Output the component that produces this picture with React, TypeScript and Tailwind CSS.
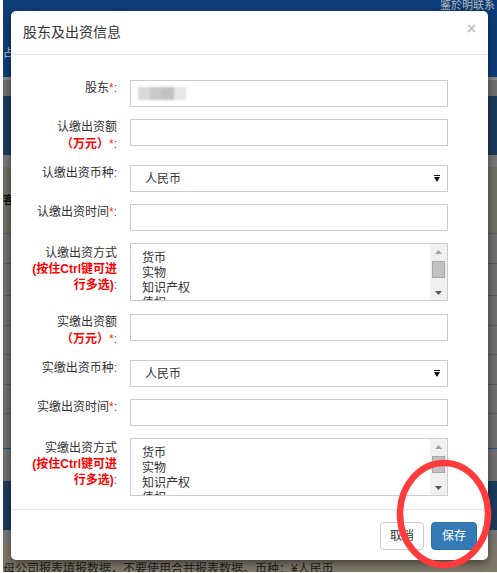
import React from 'react';

const OPTIONS = ['货币', '实物', '知识产权', '债权'];

const Colon = () => <span className="text-[#7b2fd6]">:</span>;
const Star = () => <span className="text-[#ff2a00]">*</span>;

function Row({ h, label, lead = 'leading-[17px]', children }: { h: string; label: React.ReactNode; lead?: string; children: React.ReactNode }) {
  return (
    <div className={`flex ${h}`}>
      <div className={`w-[93px] shrink-0 text-right text-[12px] text-[#333] ${lead}`}>{label}</div>
      <div className="ml-[13px] w-[318px]">{children}</div>
    </div>
  );
}

function TextInput({ children }: { children?: React.ReactNode }) {
  return <div className="flex h-[27px] items-center border border-[#ccc] bg-white">{children}</div>;
}

function Select() {
  return (
    <div className="flex h-[27px] items-center justify-between border border-[#ccc] bg-white pl-[14px] pr-[7px] text-[12px] text-[#333]">
      <span>人民币</span>
      <svg width="6" height="7" viewBox="0 0 6 7">
        <path d="M0 0h6v1H0z M0 2h6L3 7z" fill="#111" />
      </svg>
    </div>
  );
}

function ListBox() {
  return (
    <div className="flex h-[58px] overflow-hidden border border-[#ccc] bg-white">
      <div className="flex-1 pl-[11px] pt-[7px] text-[12px] leading-[15px] text-[#333]">
        {OPTIONS.map((o) => (
          <div key={o}>{o}</div>
        ))}
      </div>
      {/* scrollbar */}
      <div className="flex w-[17px] flex-col items-center bg-[#f0f0f0]">
        <svg className="mt-[6px]" width="7" height="4" viewBox="0 0 7 4">
          <path d="M0 4L3.5 0L7 4z" fill="#a3a3a3" />
        </svg>
        <div className="mt-[7px] h-[17px] w-[13px] border border-[#a8a8a8] bg-[#c1c1c1]" />
        <svg className="mt-[13px]" width="7" height="4" viewBox="0 0 7 4">
          <path d="M0 0h7L3.5 4z" fill="#555" />
        </svg>
      </div>
    </div>
  );
}

function Backdrop() {
  return (
    <div className="flex h-[573px] w-[497px] flex-col border-l-[3px] border-white">
      <div className="flex h-[77px] items-start justify-between bg-[#0d3d78] text-[11px] leading-[11px] text-[#b9b9b9]">
        <span className="mt-[48px] text-[#c8c8c8]">占</span>
        <span className="mr-[2px]">鉴於明联系</span>
      </div>
      <div className="h-[3px] bg-[#8a8a8a]" />
      <div className="h-[16px] bg-[#6f6f6f]" />
      <div className="h-[59px] bg-[#1b3a5c]" />
      <div className="h-[12px] bg-[#777]" />
      <div className="flex h-[66px] items-center bg-[#6b7062] text-[11px] font-bold text-[#111]">
        <span>客</span>
      </div>
      <div className="h-[30px] border-t border-[#5d5d5d] bg-[#6f6f6f]" />
      <div className="h-[32px] border-t border-[#5d5d5d] bg-[#6f6f6f]" />
      <div className="h-[30px] border-t border-[#5d5d5d] bg-[#6f6f6f]" />
      <div className="h-[29px] border-t border-[#5d5d5d] bg-[#6f6f6f]" />
      <div className="h-[30px] border-t border-[#5d5d5d] bg-[#6f6f6f]" />
      <div className="h-[29px] border-t border-[#5d5d5d] bg-[#6f6f6f]" />
      <div className="h-[35px] border-t border-[#5d5d5d] bg-[#6f6f6f]" />
      <div className="h-[17px] border-t border-[#1b4f8a] bg-[#707070]" />
      <div className="h-[16px] bg-[#707070]" />
      <div className="h-[49px] bg-[#1b3a5c]" />
      <div className="h-[12px] bg-[#777]" />
      <div className="flex h-[30px] items-end overflow-hidden bg-[#7e786a]">
        <span className="-mb-[5px] whitespace-nowrap text-[12px] leading-[16px] text-[#1e1e1e]">母公司报表填报数据，不要使用合并报表数据。币种：¥人民币</span>
      </div>
    </div>
  );
}

export default function App() {
  return (
    <div className="relative h-[573px] w-[497px] overflow-hidden font-['Liberation_Sans','Noto_Sans_CJK_SC',sans-serif]">
      <Backdrop />

      {/* Modal */}
      <div className="absolute left-[11px] top-[11px] w-[477px] rounded-[5px] bg-white shadow-[0_3px_9px_rgba(0,0,0,0.5)]">
        <div className="flex h-[44px] items-center justify-between border-b border-[#e5e5e5] pl-[12px] pr-[12px]">
          <span className="text-[14px] text-[#333]">股东及出资信息</span>
          <span className="-mt-[8px] text-[16px] font-bold leading-none text-[#c4c4c4]">×</span>
        </div>

        <div className="flex flex-col gap-[12px] pb-[12px] pl-[13px] pt-[25px]">
          <Row h="h-[27px]" label={<>股东<Star /><Colon /></>}>
            <TextInput>
              <div className="ml-[7px] flex blur-[1px]">
                <div className="h-[13px] w-[12px] bg-[#d9d9d9]" />
                <div className="h-[13px] w-[12px] bg-[#c8c8c8]" />
                <div className="h-[13px] w-[12px] bg-[#c2c2c2]" />
                <div className="h-[13px] w-[12px] bg-[#e6e6e6]" />
              </div>
            </TextInput>
          </Row>
          <Row
            h="h-[34px]"
            label={
              <>
                认缴出资额
                <br />
                <span className="font-bold text-[#f00]">（万元）</span>
                <Star />
                <Colon />
              </>
            }
          >
            <TextInput />
          </Row>
          <Row h="h-[27px]" label={<>认缴出资币种<Colon /></>}>
            <Select />
          </Row>
          <Row h="h-[27px]" label={<>认缴出资时间<Star /><Colon /></>}>
            <TextInput />
          </Row>
          <Row
            h="h-[59px]"
            lead="leading-[16px] pt-[2px]"
            label={
              <>
                认缴出资方式
                <br />
                <span className="font-bold text-[#f00]">(按住Ctrl键可进</span>
                <br />
                <span className="font-bold text-[#f00]">行多选)</span>
                <Colon />
              </>
            }
          >
            <ListBox />
          </Row>
          <Row
            h="h-[34px]"
            label={
              <>
                实缴出资额
                <br />
                <span className="font-bold text-[#f00]">（万元）</span>
                <Star />
                <Colon />
              </>
            }
          >
            <TextInput />
          </Row>
          <Row h="h-[27px]" label={<>实缴出资币种<Colon /></>}>
            <Select />
          </Row>
          <Row h="h-[27px]" label={<>实缴出资时间<Star /><Colon /></>}>
            <TextInput />
          </Row>
          <Row
            h="h-[59px]"
            lead="leading-[16px] pt-[2px]"
            label={
              <>
                实缴出资方式
                <br />
                <span className="font-bold text-[#f00]">(按住Ctrl键可进</span>
                <br />
                <span className="font-bold text-[#f00]">行多选)</span>
                <Colon />
              </>
            }
          >
            <ListBox />
          </Row>
        </div>

        <div className="flex justify-end gap-[7px] border-t border-[#e5e5e5] pb-[10px] pr-[11px] pt-[12px]">
          <button className="h-[28px] w-[44px] rounded-[4px] border border-[#ccc] bg-white text-[12px] text-[#333]">取消</button>
          <button className="h-[28px] w-[46px] rounded-[4px] border border-[#2e6da4] bg-[#337ab7] text-[12px] text-white">保存</button>
        </div>
      </div>

      {/* red annotation circle */}
      <svg className="absolute left-[396px] top-[458px]" width="96" height="112" viewBox="0 0 96 112">
        <ellipse cx="48" cy="56" rx="44" ry="51" fill="none" stroke="#ff3b3b" strokeWidth="6.5" />
      </svg>
    </div>
  );
}
